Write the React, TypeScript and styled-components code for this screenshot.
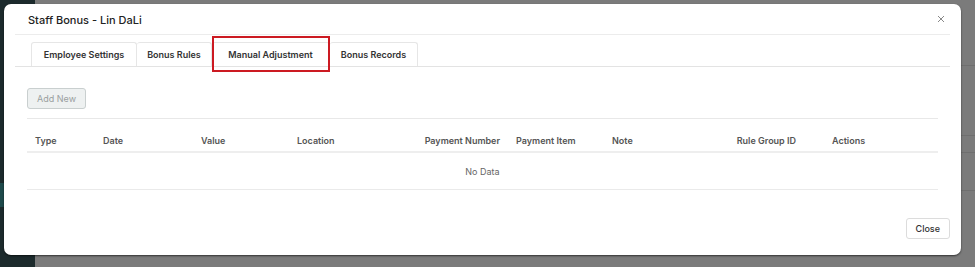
import React from 'react';
import styled, { createGlobalStyle } from 'styled-components';

const GlobalStyle = createGlobalStyle`
  html, body {
    margin: 0;
    padding: 0;
    width: 975px;
    height: 267px;
    overflow: hidden;
    font-family: Inter, 'Noto Sans', sans-serif;
  }
`;

const Page = styled.div`
  position: relative;
  display: flex;
  width: 975px;
  height: 267px;
`;

const SideStrip = styled.div`
  width: 35px;
  background: #1c2a2c;
  display: flex;
  flex-direction: column;
  padding-top: 183px;
  box-sizing: border-box;
`;

const SideActive = styled.div`
  height: 24px;
  background: #1e4a4b;
`;

const Backdrop = styled.div`
  flex: 1;
  background: #7b7b7b;
  display: flex;
  flex-direction: column;
`;

const BackLine = styled.div<{ $top: number }>`
  margin-top: ${(p) => p.$top}px;
  border-top: 1px solid #6f6f6f;
`;

const Modal = styled.div`
  position: absolute;
  left: 4px;
  top: 4px;
  width: 957px;
  height: 251px;
  background: #fff;
  border-radius: 7px;
  box-shadow: 0 1px 2px rgba(0, 0, 0, 0.6);
  padding: 0 11px;
  box-sizing: border-box;
  display: flex;
  flex-direction: column;
`;

const Header = styled.div`
  height: 30px;
  display: flex;
  align-items: center;
  justify-content: space-between;
  padding: 0 4px 0 13px;
  border-bottom: 1px solid #ececec;
`;

const Title = styled.div`
  font-size: 11px;
  font-weight: 500;
  color: #222;
  padding-top: 2px;
`;

const CloseX = styled.button`
  border: none;
  background: none;
  padding: 0;
  width: 10px;
  height: 10px;
  display: flex;
  align-items: center;
  justify-content: center;
  cursor: pointer;
`;

const TabBar = styled.div`
  display: flex;
  margin-top: 7px;
  padding-left: 16px;
  border-bottom: 1px solid #e3e3e3;
`;

const Tab = styled.div<{ $active?: boolean; $width: number }>`
  position: relative;
  width: ${(p) => p.$width}px;
  height: 24px;
  box-sizing: border-box;
  display: flex;
  align-items: center;
  justify-content: center;
  font-size: 9px;
  font-weight: 600;
  color: #333;
  white-space: nowrap;
  border: 1px solid #e6e6e6;
  border-left: none;
  border-bottom: none;
  border-radius: 3px 3px 0 0;
  margin-bottom: ${(p) => (p.$active ? '-1px' : '0')};
  background: #fff;
  &:first-child {
    border-left: 1px solid #e6e6e6;
  }
`;

const Highlight = styled.span`
  position: absolute;
  left: 0;
  right: -1px;
  top: -7px;
  bottom: -6px;
  border: 2px solid #cc1a22;
  pointer-events: none;
`;

const Content = styled.div`
  padding: 21px 12px 0;
  display: flex;
  flex-direction: column;
`;

const Button = styled.button<{ $disabled?: boolean }>`
  font-family: inherit;
  font-size: 9px;
  height: 21px;
  padding: 0 9px;
  border-radius: 3px;
  border: 1px solid ${(p) => (p.$disabled ? '#c9cfcf' : '#dcdcdc')};
  background: ${(p) => (p.$disabled ? '#eef1f1' : '#fff')};
  color: ${(p) => (p.$disabled ? '#9aa0a0' : '#333')};
  font-weight: ${(p) => (p.$disabled ? 400 : 500)};
  cursor: ${(p) => (p.$disabled ? 'default' : 'pointer')};
`;

const Toolbar = styled.div`
  display: flex;
`;

const Table = styled.div`
  margin-top: 9px;
  border-top: 1px solid #e8e8e8;
`;

const cols = '68px 98px 96px 100px 119px 96px 100px 100px 1fr';

const HeadRow = styled.div`
  display: grid;
  grid-template-columns: ${cols};
  height: 34px;
  box-sizing: border-box;
  padding-top: 10px;
  align-items: center;
  border-bottom: 2px solid #eeeeee;
`;

const HeadCell = styled.div<{ $align?: string; $pad?: number }>`
  font-size: 9px;
  font-weight: 600;
  color: #555;
  padding: 0 8px;
  padding-left: ${(p) => p.$pad ?? 8}px;
  text-align: ${(p) => p.$align ?? 'left'};
  white-space: nowrap;
`;

const EmptyRow = styled.div`
  height: 36px;
  display: flex;
  align-items: center;
  justify-content: center;
  font-size: 9px;
  color: #666;
  border-bottom: 1px solid #eaeaea;
`;

const Footer = styled.div`
  display: flex;
  justify-content: flex-end;
  margin-top: 28px;
`;

const columns: { label: string; align?: string; pad?: number }[] = [
  { label: 'Type' },
  { label: 'Date' },
  { label: 'Value' },
  { label: 'Location' },
  { label: 'Payment Number', align: 'right' },
  { label: 'Payment Item' },
  { label: 'Note' },
  { label: 'Rule Group ID', align: 'right' },
  { label: 'Actions', pad: 28 },
];

const tabs = [
  { label: 'Employee Settings', width: 106 },
  { label: 'Bonus Rules', width: 75 },
  { label: 'Manual Adjustment', width: 118 },
  { label: 'Bonus Records', width: 88 },
];

const activeTab = 'Manual Adjustment';

export default function App() {
  return (
    <>
      <GlobalStyle />
      <Page>
        <SideStrip>
          <SideActive />
        </SideStrip>
        <Backdrop>
          <BackLine $top={65} />
          <BackLine $top={69} />
          <BackLine $top={16} />
          <BackLine $top={37} />
        </Backdrop>
        <Modal>
          <Header>
            <Title>Staff Bonus - Lin DaLi</Title>
            <CloseX aria-label="close">
              <svg width="8" height="8" viewBox="0 0 8 8">
                <path d="M1 1L7 7M7 1L1 7" stroke="#888" strokeWidth="1" />
              </svg>
            </CloseX>
          </Header>
          <TabBar>
            {tabs.map((t) => (
              <Tab key={t.label} $width={t.width} $active={t.label === activeTab}>
                {t.label}
                {t.label === activeTab && <Highlight />}
              </Tab>
            ))}
          </TabBar>
          <Content>
            <Toolbar>
              <Button $disabled>Add New</Button>
            </Toolbar>
            <Table>
              <HeadRow>
                {columns.map((c) => (
                  <HeadCell key={c.label} $align={c.align} $pad={c.pad}>
                    {c.label}
                  </HeadCell>
                ))}
              </HeadRow>
              <EmptyRow>No Data</EmptyRow>
            </Table>
          </Content>
          <Footer>
            <Button>Close</Button>
          </Footer>
        </Modal>
      </Page>
    </>
  );
}
